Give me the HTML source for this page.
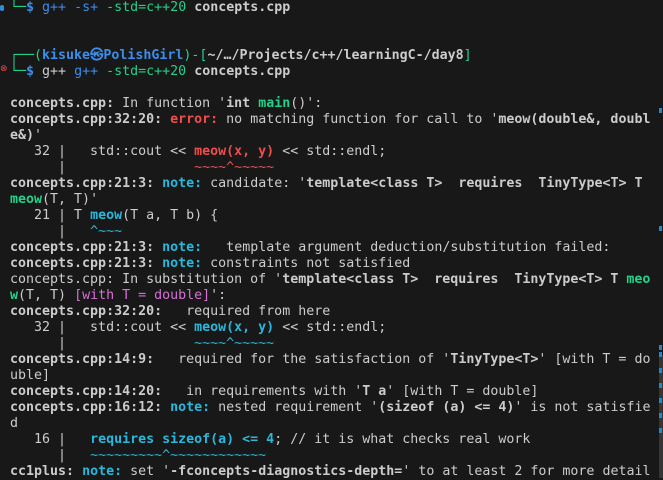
<!DOCTYPE html>
<html><head><meta charset="utf-8"><style>
html,body{margin:0;padding:0;background:#181818;width:663px;height:478px;overflow:hidden}
pre{margin:0;position:absolute;left:10px;top:0;font-family:"DejaVu Sans Mono","Liberation Mono",monospace;font-size:13.3px;line-height:16px;color:#cccccc;white-space:pre}
b{font-weight:bold}
.r{color:#f14c4c}.c{color:#29b8db}.g{color:#23d18b}.m{color:#d670d6}.bl{color:#3b8eea}
.mk{position:absolute;left:659px;width:3px;height:5px;background:#1f8ad2}
</style></head><body>
<div style="position:absolute;left:0;top:5px;width:4px;height:6px;border-radius:3px;background:#2f8fd8"></div>
<div style="position:absolute;left:0;top:64px;color:#f14c4c;font:9px 'DejaVu Sans',sans-serif">⊗</div>
<div style="position:absolute;left:659px;top:355px;width:4px;height:123px;background:#353535"></div>
<div class="mk" style="top:108px"></div>
<div class="mk" style="top:226px"></div>
<div class="mk" style="top:345px"></div>
<div class="mk" style="top:352px"></div>
<div class="mk" style="top:368px"></div>
<div class="mk" style="top:383px"></div>
<div class="mk" style="top:398px"></div>
<div class="mk" style="top:413px"></div>
<div class="mk" style="top:428px"></div>
<pre><span class="g">└─</span><b class="bl">$</b> <span class="bl">g++</span> <span class="bl">-s+</span> <span class="g">-std=c++20</span> <b>concepts.cpp</b>


<span class="g">┌──(</span><b class="bl">kisuke㉿PolishGirl</b><span class="g">)-[</span><b>~/…/Projects/c++/learningC-/day8</b><span class="g">]</span>
<span class="g">└─</span><b class="bl">$</b> g++ <span class="bl">g++</span> <span class="g">-std=c++20</span> <b>concepts.cpp</b>

<b>concepts.cpp:</b> In function '<b>int <span class="g">main</span></b>()':
<b>concepts.cpp:32:20:</b> <b class="r">error: </b>no matching function for call to '<b>meow(double&amp;, doubl</b>
<b>e&amp;)</b>'
   32 |   std::cout &lt;&lt; <b class="r">meow(x, y)</b> &lt;&lt; std::endl;
      |                <span class="r">~~~~^~~~~~</span>
<b>concepts.cpp:21:3:</b> <b class="c">note: </b>candidate: '<b>template&lt;class T&gt;  requires  TinyType&lt;T&gt; T</b>
<b class="g">meow</b>(T, T)'
   21 | T <b class="c">meow</b>(T a, T b) {
      |   <span class="c">^~~~</span>
<b>concepts.cpp:21:3:</b> <b class="c">note: </b>  template argument deduction/substitution failed:
<b>concepts.cpp:21:3:</b> <b class="c">note: </b>constraints not satisfied
concepts.cpp: In substitution of '<b>template&lt;class T&gt;  requires  TinyType&lt;T&gt; T <span class="g">meo</span></b>
<b class="g">w</b>(T, T) <span class="m">[with T = double]</span>':
<b>concepts.cpp:32:20:</b>   required from here
   32 |   std::cout &lt;&lt; <b class="c">meow(x, y)</b> &lt;&lt; std::endl;
      |                <span class="c">~~~~^~~~~~</span>
<b>concepts.cpp:14:9:</b>   required for the satisfaction of '<b>TinyType&lt;T&gt;</b>' [with T = do
uble]
<b>concepts.cpp:14:20:</b>   in requirements with '<b>T a</b>' [with T = double]
<b>concepts.cpp:16:12:</b> <b class="c">note: </b>nested requirement '<b>(sizeof (a) &lt;= 4)</b>' is not satisfie
d
   16 |   <b class="c">requires sizeof(a) &lt;= 4</b>; // it is what checks real work
      |   <span class="c">~~~~~~~~~^~~~~~~~~~~~~</span>
<b>cc1plus:</b> <b class="c">note: </b>set '<b>-fconcepts-diagnostics-depth=</b>' to at least 2 for more detail</pre>
</body></html>
